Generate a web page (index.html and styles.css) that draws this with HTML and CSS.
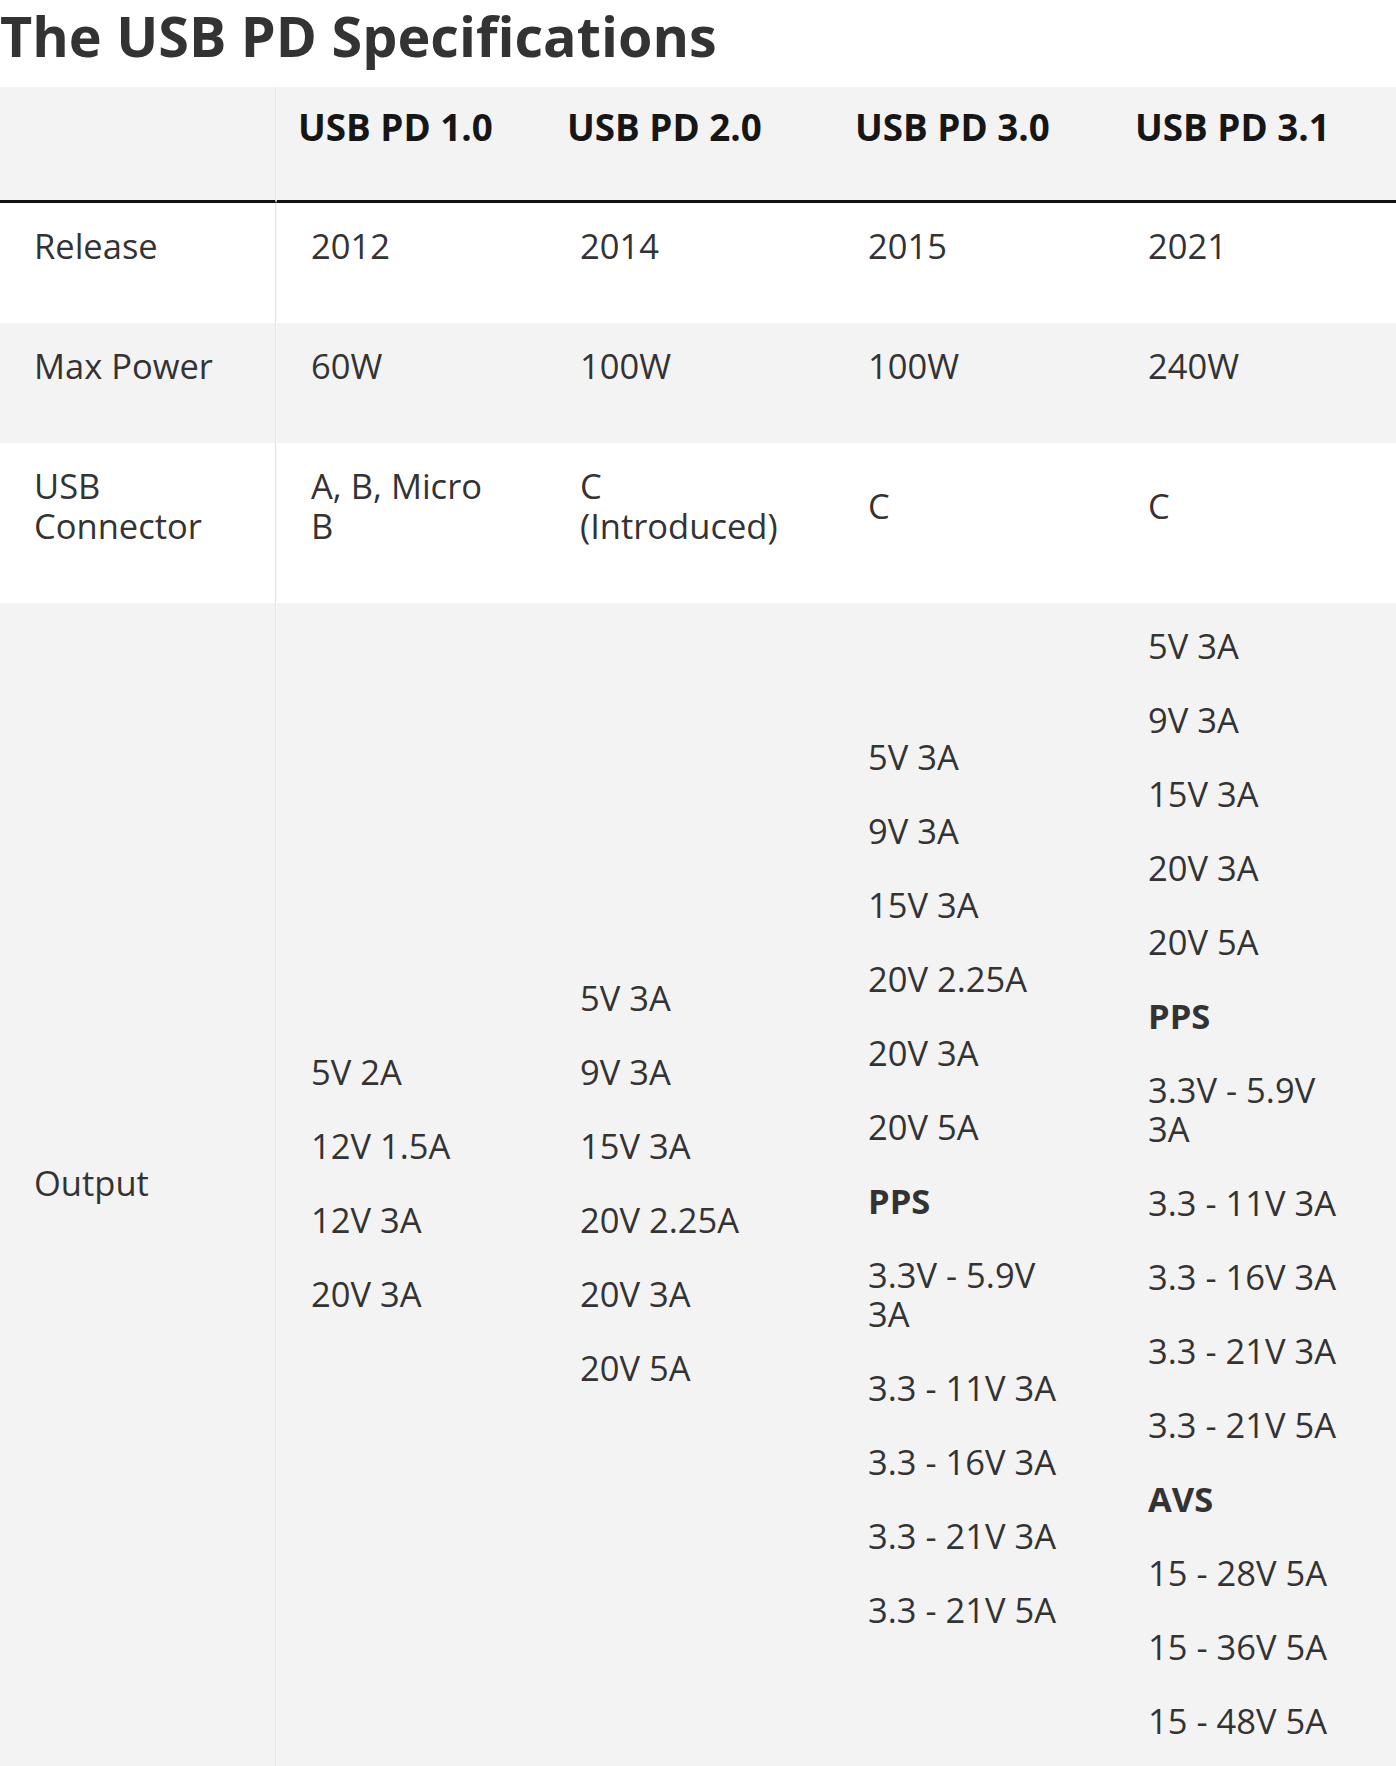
FILE: index.html
```html
<!DOCTYPE html>
<html lang="en">
<head>
<meta charset="utf-8">
<title>The USB PD Specifications</title>
<link rel="stylesheet" href="styles.css">
</head>
<body>
<h2 class="title">The USB PD Specifications</h2>
<table class="spec">
  <colgroup>
    <col class="c1"><col class="c2"><col class="c3"><col class="c4"><col class="c5">
  </colgroup>
  <thead>
    <tr>
      <th class="first"></th>
      <th class="second">USB PD 1.0</th>
      <th>USB PD 2.0</th>
      <th>USB PD 3.0</th>
      <th>USB PD 3.1</th>
    </tr>
  </thead>
  <tbody>
    <tr>
      <td class="first"><p>Release</p></td>
      <td class="second"><p>2012</p></td>
      <td><p>2014</p></td>
      <td><p>2015</p></td>
      <td><p>2021</p></td>
    </tr>
    <tr class="shade">
      <td class="first"><p>Max Power</p></td>
      <td class="second"><p>60W</p></td>
      <td><p>100W</p></td>
      <td><p>100W</p></td>
      <td><p>240W</p></td>
    </tr>
    <tr>
      <td class="first"><p>USB Connector</p></td>
      <td class="second"><p>A, B, Micro B</p></td>
      <td><p>C (Introduced)</p></td>
      <td><p>C</p></td>
      <td><p>C</p></td>
    </tr>
    <tr class="shade">
      <td class="first"><p>Output</p></td>
      <td class="second">
        <p>5V 2A</p>
        <p>12V 1.5A</p>
        <p>12V 3A</p>
        <p>20V 3A</p>
      </td>
      <td>
        <p>5V 3A</p>
        <p>9V 3A</p>
        <p>15V 3A</p>
        <p>20V 2.25A</p>
        <p>20V 3A</p>
        <p>20V 5A</p>
      </td>
      <td>
        <p>5V 3A</p>
        <p>9V 3A</p>
        <p>15V 3A</p>
        <p>20V 2.25A</p>
        <p>20V 3A</p>
        <p>20V 5A</p>
        <p class="group">PPS</p>
        <p>3.3V - 5.9V 3A</p>
        <p>3.3 - 11V 3A</p>
        <p>3.3 - 16V 3A</p>
        <p>3.3 - 21V 3A</p>
        <p>3.3 - 21V 5A</p>
      </td>
      <td>
        <p>5V 3A</p>
        <p>9V 3A</p>
        <p>15V 3A</p>
        <p>20V 3A</p>
        <p>20V 5A</p>
        <p class="group">PPS</p>
        <p>3.3V - 5.9V 3A</p>
        <p>3.3 - 11V 3A</p>
        <p>3.3 - 16V 3A</p>
        <p>3.3 - 21V 3A</p>
        <p>3.3 - 21V 5A</p>
        <p class="group">AVS</p>
        <p>15 - 28V 5A</p>
        <p>15 - 36V 5A</p>
        <p>15 - 48V 5A</p>
      </td>
    </tr>
  </tbody>
</table>
</body>
</html>
```

FILE: styles.css
```css
html, body {
  margin: 0;
  padding: 0;
  background: #ffffff;
}

body {
  font-family: "Open Sans", "Noto Sans", "Liberation Sans", sans-serif;
  color: #333333;
}

.title {
  margin: 0 0 17px 0;
  font-size: 55.7px;
  line-height: 70px;
  font-weight: 700;
  color: #333333;
}

.spec {
  width: 1396px;
  table-layout: fixed;
  border-collapse: separate;
  border-spacing: 0;
}

.c1 { width: 276px; }
.c2 { width: 270px; }
.c3 { width: 288px; }
.c4 { width: 280px; }
.c5 { width: 282px; }

.spec th {
  background: #f3f3f3;
  color: #161616;
  font-size: 36.8px;
  line-height: 41px;
  font-weight: 700;
  text-align: left;
  vertical-align: top;
  padding: 20px 21px 52px 21px;
  border-bottom: 3px solid #111111;
}

.spec td {
  font-size: 34.5px;
  line-height: 39.5px;
  color: #333333;
  vertical-align: middle;
  padding: 23px 34px 23px 34px;
}

.spec td p {
  margin: 0 0 34.5px 0;
}

.spec td p.group {
  font-weight: 700;
}

.spec .shade td {
  background: #f3f3f3;
}

.spec .first {
  border-right: 1px solid #e8e8e8;
}

.spec .second {
  border-left: 1px solid #f8f8f8;
}
```
